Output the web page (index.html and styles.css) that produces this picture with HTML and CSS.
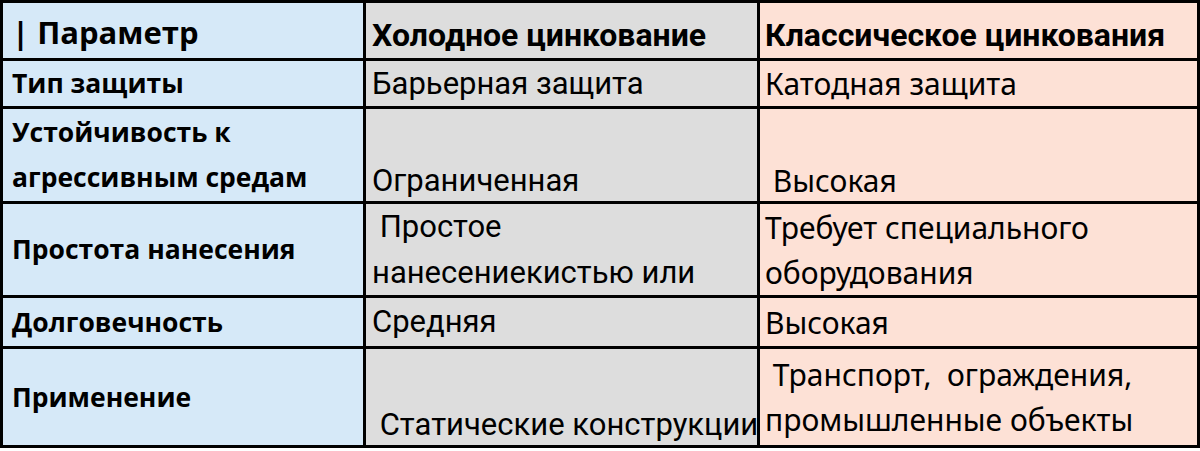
FILE: index.html
```html
<!DOCTYPE html>
<html lang="ru">
<head>
<meta charset="utf-8">
<title>Сравнение цинкования</title>
<link rel="stylesheet" href="styles.css">
</head>
<body>
<div class="table">
  <div class="cell c1 head1 mid">| Параметр</div>
  <div class="cell c2 head mid">Холодное цинкование</div>
  <div class="cell c3 head mid">Классическое цинкования</div>

  <div class="cell c1 label mid">Тип защиты</div>
  <div class="cell c2 txt2 mid">Барьерная защита</div>
  <div class="cell c3 txt3 mid">Катодная защита</div>

  <div class="cell c1 label mid">Устойчивость к<br>агрессивным средам</div>
  <div class="cell c2 txt2 bot">Ограниченная</div>
  <div class="cell c3 txt3 bot">&nbsp;Высокая</div>

  <div class="cell c1 label mid">Простота нанесения</div>
  <div class="cell c2 txt2 mid">&nbsp;Простое<br>нанесениекистью или</div>
  <div class="cell c3 txt3 mid">Требует специального<br>оборудования</div>

  <div class="cell c1 label mid">Долговечность</div>
  <div class="cell c2 txt2 mid">Средняя</div>
  <div class="cell c3 txt3 mid">Высокая</div>

  <div class="cell c1 label mid">Применение</div>
  <div class="cell c2 txt2 bot">&nbsp;Статические конструкции</div>
  <div class="cell c3 txt3 mid">&nbsp;Транспорт,&nbsp; ограждения,<br>промышленные объекты</div>
</div>
</body>
</html>
```

FILE: styles.css
```css
html, body {
  margin: 0;
  padding: 0;
  background: #ffffff;
}

.table {
  display: grid;
  grid-template-columns: 360px 391px 437px;
  grid-template-rows: 55px 45px 92px 91px 48px 96px;
  gap: 3px;
  padding: 3px;
  width: 1194px;
  background: #000000;
  color: #000000;
}

.cell {
  display: flex;
  flex-direction: column;
  white-space: nowrap;
  overflow: hidden;
}

.mid { justify-content: center; }
.bot { justify-content: flex-end; line-height: 40px; }

.c1 { background: #d6e9f8; padding-left: 9px; }
.c2 { background: #dddddd; padding-left: 6px; }
.c3 { background: #fde1d6; padding-left: 5px; }

.head1 {
  font-family: "Open Sans", "Noto Sans", sans-serif;
  font-weight: 700;
  font-size: 31px;
  line-height: 44px;
  padding-top: 3px;
}

.head {
  font-family: Roboto, "Noto Sans", sans-serif;
  font-weight: 700;
  font-size: 32px;
  line-height: 44px;
  padding-top: 9px;
}

.label {
  font-family: "Open Sans", "Noto Sans", sans-serif;
  font-weight: 700;
  font-size: 26.5px;
  line-height: 45px;
}

.txt2 {
  font-family: Roboto, "Noto Sans", sans-serif;
  font-size: 31px;
  line-height: 46px;
}

.txt3 {
  font-family: "Noto Sans", "Open Sans", sans-serif;
  font-size: 30px;
  line-height: 45px;
}

.txt2.bot,
.txt3.bot {
  line-height: 40px;
}
```
